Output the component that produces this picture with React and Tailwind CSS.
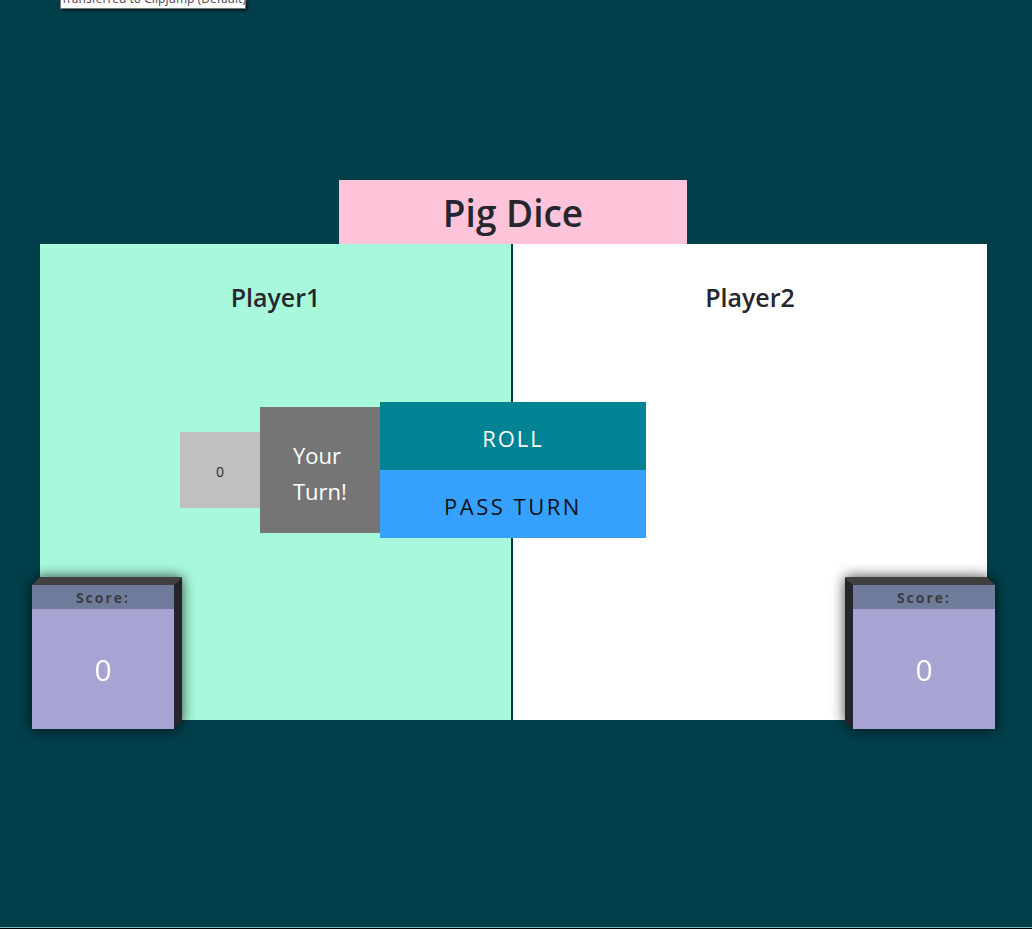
import React from 'react';

const font = { fontFamily: '"Open Sans", "Noto Sans", sans-serif' };

function ScoreBox({ side }) {
  const left = side === 'left';
  return (
    <div
      className={`absolute bottom-[-9px] w-[142px] drop-shadow-[0_0_7px_rgba(0,0,0,0.75)] ${left ? 'left-[-8px]' : 'right-[-8px]'}`}
    >
      {/* top face */}
      {left ? (
        <div className="absolute top-[-8px] left-[4px] w-[142px] h-[8px] bg-[#404040] -skew-x-45" />
      ) : (
        <div className="absolute top-[-8px] left-[-4px] w-[142px] h-[8px] bg-[#404040] skew-x-45" />
      )}
      {/* side face */}
      {left ? (
        <div className="absolute top-[-4px] right-[-8px] w-[8px] h-[144px] bg-[#232529] -skew-y-45" />
      ) : (
        <div className="absolute top-[-4px] left-[-8px] w-[8px] h-[144px] bg-[#232529] skew-y-45" />
      )}
      <div className="relative">
        <div className="h-[24px] bg-[#6e7b9a] flex items-center justify-center text-[14px] font-bold tracking-[2px] text-[#3b3b3d]">
          Score:
        </div>
        <div className="h-[120px] bg-[#a7a3d2] flex items-center justify-center text-[30px] text-white">
          0
        </div>
      </div>
    </div>
  );
}

export default function App() {
  return (
    <main className="relative min-h-[929px] bg-[#003f4a] pt-[180px] overflow-hidden" style={font}>
      {/* system tooltip */}
      <div className="absolute top-0 left-[60px] w-[186px] h-[9px] overflow-hidden bg-white border border-t-0 border-[#767676] shadow-[2px_2px_3px_rgba(0,0,0,0.5)]">
        <div className="-mt-[9px] text-center text-[12px] leading-[16px] text-[#5a4a5a] whitespace-nowrap" style={{ fontFamily: '"Noto Sans", sans-serif' }}>
          Transferred to Clipjump (Default)
        </div>
      </div>

      {/* Title */}
      <div className="w-[348px] h-[64px] ml-[339px] bg-[#ffc4d9] flex items-center justify-center pt-[1px]">
        <h1 className="text-[37px] font-semibold text-[#25272d]">Pig Dice</h1>
      </div>

      {/* Board */}
      <div className="relative ml-[40px] w-[947px] h-[476px] flex">
        <div className="w-[471px] bg-[#a8f9dc] pt-[37px] text-center">
          <h2 className="text-[25px] leading-[32px] font-semibold text-[#25272d]">Player1</h2>
        </div>
        <div className="w-[2px] bg-[#003f4a]" />
        <div className="flex-1 bg-white pt-[37px] text-center">
          <h2 className="text-[25px] leading-[32px] font-semibold text-[#25272d]">Player2</h2>
        </div>

        {/* Controls */}
        <div className="absolute left-[140px] top-[158px] flex items-center">
          <div className="w-[80px] h-[76px] bg-[#c0c0c0] flex items-center justify-center pt-[3px] text-[14px] text-[#2a2a3a]">
            0
          </div>
          <div className="w-[120px] h-[126px] bg-[#757575] flex flex-col justify-center pt-[6px] pl-[33px] text-[22px] leading-[36px] text-white">
            <span>Your</span>
            <span>Turn!</span>
          </div>
          <div className="w-[266px] flex flex-col">
            <button className="h-[68px] pt-[4px] bg-[#008494] text-white text-[22px] tracking-[2px]">ROLL</button>
            <button className="h-[68px] pt-[4px] bg-[#36a1ff] text-[#111] text-[22px] tracking-[2.5px]">PASS TURN</button>
          </div>
        </div>

        <ScoreBox side="left" />
        <ScoreBox side="right" />
      </div>

      <div className="absolute bottom-0 left-0 right-0 h-[2px] border-t border-[#7fbcbc] bg-black" />
    </main>
  );
}
